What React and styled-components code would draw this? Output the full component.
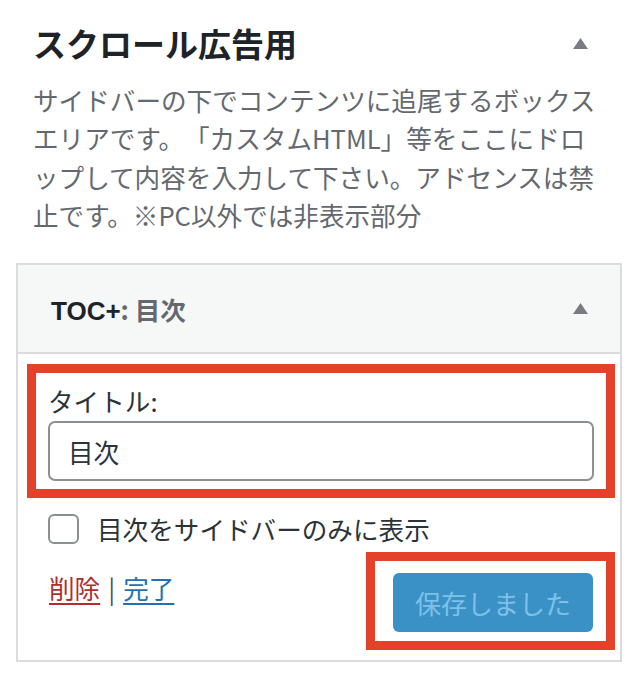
import React from 'react'
import styled, { createGlobalStyle } from 'styled-components'

const GlobalStyle = createGlobalStyle`
  body {
    margin: 0;
    background: #fff;
    font-family: "Noto Sans CJK JP", "Noto Sans", sans-serif;
    text-spacing-trim: space-all;
  }
`

const Page = styled.div`
  width: 638px;
  padding: 20px 16px 0;
  box-sizing: border-box;
`

const AreaHead = styled.div`
  display: flex;
  align-items: center;
  justify-content: space-between;
  padding: 0 34px 0 17px;
`

const AreaTitle = styled.h2`
  margin: 0;
  font-size: 33px;
  line-height: 46px;
  font-weight: 700;
  color: #1d2327;
`

const Description = styled.p`
  margin: 15px 0 0;
  padding: 0 0 0 17px;
  font-size: 25.6px;
  line-height: 38.3px;
  color: #646970;
  white-space: nowrap;
`

const Widget = styled.div`
  margin-top: 29px;
  border: 2px solid #dcdcde;
`

const WidgetTop = styled.div`
  display: flex;
  align-items: center;
  justify-content: space-between;
  height: 87px;
  padding: 0 32px 0 33px;
  background: #f6f7f7;
  border-bottom: 2px solid #dcdcde;
`

const WidgetTitle = styled.h3`
  margin: 0;
  font-size: 26px;
  font-weight: 600;
  color: #1d2327;
  font-family: "Liberation Sans", "Noto Sans CJK JP", sans-serif;
`

const InTitle = styled.span`
  color: #646970;
  font-family: "Noto Sans CJK JP", sans-serif;
  font-size: 25.5px;
`

const Toggle = styled.svg`
  width: 15px;
  height: 11px;
  fill: #787c82;
  display: block;
`

const WidgetInside = styled.div`
  padding: 10px 5px 10px 9px;
  display: flex;
  flex-direction: column;
`

const Highlight = styled.div`
  border: 9px solid #e4412a;
  padding: ${p => p.$pad};
`

const Label = styled.label`
  display: block;
  font-size: 25.6px;
  line-height: 36px;
  color: #2c3338;
  margin-top: 10px;
`

const TextInput = styled.div`
  margin-top: 2px;
  height: 60px;
  box-sizing: border-box;
  border: 2px solid #8c8f94;
  border-radius: 7px;
  padding: 0 18px;
  display: flex;
  align-items: center;
  font-size: 25.6px;
  color: #2c3338;
`

const CheckRow = styled.div`
  display: flex;
  align-items: center;
  gap: 18px;
  margin: 12px 0 0 21px;
  font-size: 25.6px;
  color: #2c3338;
`

const Box = styled.span`
  width: 31px;
  height: 30px;
  box-sizing: border-box;
  border: 2px solid #8c8f94;
  border-radius: 6px;
  background: #fff;
`

const Controls = styled.div`
  display: flex;
  justify-content: space-between;
  align-items: flex-start;
  margin-top: 5px;
`

const Links = styled.div`
  display: flex;
  align-items: center;
  gap: 8px;
  margin: 18px 0 0 22px;
  font-size: 25.6px;
  line-height: 36px;
  color: #50575e;
`

const Link = styled.a`
  color: ${p => (p.$danger ? '#b32d2e' : '#2271b1')};
  text-decoration: underline;
  text-underline-offset: 4px;
`

const SaveButton = styled.button`
  width: 200px;
  height: 59px;
  border: none;
  border-radius: 6px;
  background: #3a91c5;
  color: #7ec1e8;
  font-family: "Noto Sans CJK JP", sans-serif;
  font-size: 26px;
  cursor: default;
`

const Triangle = () => (
  <Toggle viewBox="0 0 15 11">
    <path d="M7.5 0 L15 11 L0 11 Z" />
  </Toggle>
)

const App = () => {
  return (
    <Page>
      <GlobalStyle />
      <AreaHead>
        <AreaTitle>スクロール広告用</AreaTitle>
        <Triangle />
      </AreaHead>
      <Description>
        サイドバーの下でコンテンツに追尾するボックス<br />
        エリアです。「カスタムHTML」等をここにドロ<br />
        ップして内容を入力して下さい。アドセンスは禁<br />
        止です。※PC以外では非表示部分
      </Description>
      <Widget>
        <WidgetTop>
          <WidgetTitle>
            TOC+<InTitle>: 目次</InTitle>
          </WidgetTitle>
          <Triangle />
        </WidgetTop>
        <WidgetInside>
          <Highlight $pad="0 12px 8px 12px">
            <Label>タイトル:</Label>
            <TextInput>目次</TextInput>
          </Highlight>
          <CheckRow>
            <Box />
            目次をサイドバーのみに表示
          </CheckRow>
          <Controls>
            <Links>
              <Link $danger href="#">削除</Link>
              <span>|</span>
              <Link href="#">完了</Link>
            </Links>
            <Highlight $pad="12px 13px 9px 18px">
              <SaveButton disabled>保存しました</SaveButton>
            </Highlight>
          </Controls>
        </WidgetInside>
      </Widget>
    </Page>
  )
}

export default App
